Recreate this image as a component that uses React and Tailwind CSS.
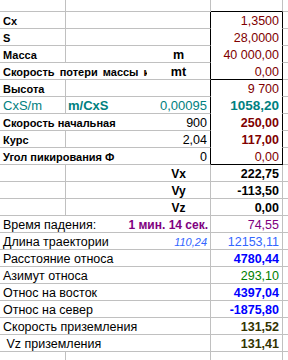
const R = {
  g: 'border-r border-r-[#c0c0c0]',
  k: 'border-r border-r-black',
  n: '',
}
const B = {
  g: 'border-b border-b-[#c0c0c0]',
  k: 'border-b border-b-black',
  w: 'border-b border-b-white',
}
const SPAN = { 1: '', 2: 'col-span-2', 3: 'col-span-3' }

function Cell({ span = 1, r = 'n', b = 'g', className = '', children }) {
  return (
    <div className={`${SPAN[span]} ${R[r]} ${B[b]} flex items-end overflow-hidden whitespace-nowrap leading-none pb-[1px] ${className}`}>
      {children}
    </div>
  )
}

function Row({ h = 'h-[17px]', children }) {
  return <div className={`grid grid-cols-[66px_81px_64px_72px_1fr] ${h}`}>{children}</div>
}

const label = 'pl-[3px] text-[11px] font-bold text-black'
const low = 'pl-[3px] text-[12.5px] text-black'
const val = 'justify-end pr-[3px] text-[12.5px]'

// Верхний блок: исходные данные (в рамке)
const INPUTS = [
  { a: 'Cx', d: '1,3500' },
  { a: 'S', d: '28,0000' },
  { a: 'Масса', c: 'm', d: '40 000,00' },
]

const VELOCITY = [
  { c: 'Vx', d: '222,75' },
  { c: 'Vy', d: '-113,50' },
  { c: 'Vz', d: '0,00' },
]

const RESULTS = [
  { a: 'Длина траектории', c: '110,24', cCls: 'text-[11px] italic text-[#3366ff]', d: '12153,11', dCls: 'text-[#3366ff]' },
  { a: 'Расстояние относа', d: '4780,44', dCls: 'font-bold text-[#0000ff]' },
  { a: 'Азимут относа', d: '293,10', dCls: 'text-[#008000]' },
  { a: 'Относ на восток', d: '4397,04', dCls: 'text-[11px] font-bold text-[#0000ff]' },
  { a: 'Относ на север', d: '-1875,80', dCls: 'text-[11px] font-bold text-[#0000ff]' },
  { a: 'Скорость приземления', d: '131,52', dCls: 'font-bold text-[#333300]' },
  { a: '\u00a0Vz приземления', d: '131,41', dCls: 'font-bold text-[#333300]' },
]

export default function App() {
  return (
    <div className="w-[288px] h-[360px] overflow-hidden bg-white font-['Liberation_Sans',Arial,sans-serif]">
      <Row h="h-[12px]">
        <Cell r="g" />
        <Cell span={2} r="g" />
        <Cell r="g" b="k" />
        <Cell />
      </Row>

      {INPUTS.map((row) => (
        <Row key={row.a}>
          <Cell r="g" className={label}>{row.a}</Cell>
          <Cell />
          <Cell r="k" className="justify-center text-[12.5px] font-bold text-black">{row.c}</Cell>
          <Cell r="k" b="w" className={`${val} text-[#800000]`}>{row.d}</Cell>
          <Cell />
        </Row>
      ))}

      <Row>
        <Cell span={2} className={`${label} [word-spacing:2px]`}>Скорость потери массы к</Cell>
        <Cell r="k" className="justify-center text-[12.5px] font-bold text-black">mt</Cell>
        <Cell r="k" b="k" className={`${val} text-[#800000]`}>0,00</Cell>
        <Cell />
      </Row>

      <Row>
        <Cell r="g" className={label}>Высота</Cell>
        <Cell span={2} r="k" />
        <Cell r="k" b="w" className={`${val} text-[#800000]`}>9 700</Cell>
        <Cell />
      </Row>

      <Row>
        <Cell r="g" className="pl-[3px] text-[13px] text-[#008080]">CxS/m</Cell>
        <Cell className="pl-[2px] text-[13px] font-bold text-[#008080]">m/CxS</Cell>
        <Cell r="k" className={`${val} text-[#008080] text-[13px]`}>0,00095</Cell>
        <Cell r="k" b="w" className={`${val} font-bold text-[#008080] text-[13.5px]`}>1058,20</Cell>
        <Cell />
      </Row>

      <Row>
        <Cell span={2} className={label}>Скорость начальная</Cell>
        <Cell r="k" className={`${val} text-black`}>900</Cell>
        <Cell r="k" b="w" className={`${val} font-bold text-[#800000]`}>250,00</Cell>
        <Cell />
      </Row>

      <Row>
        <Cell r="g" className={label}>Курс</Cell>
        <Cell />
        <Cell r="k" className={`${val} text-black`}>2,04</Cell>
        <Cell r="k" b="w" className={`${val} font-bold text-[#800000]`}>117,00</Cell>
        <Cell />
      </Row>

      <Row>
        <Cell span={2} className={label}>Угол пикирования Ф</Cell>
        <Cell r="k" className={`${val} text-black`}>0</Cell>
        <Cell r="k" b="k" className={`${val} text-[#800000]`}>0,00</Cell>
        <Cell />
      </Row>

      {VELOCITY.map((row) => (
        <Row key={row.c}>
          <Cell r="g" />
          <Cell />
          <Cell r="g" className="justify-center text-[12px] font-bold text-black">{row.c}</Cell>
          <Cell r="g" className={`${val} font-bold text-black`}>{row.d}</Cell>
          <Cell />
        </Row>
      ))}

      <Row>
        <Cell span={3} r="g" className={`${low} justify-between pr-[2px]`}>
          <span>Время падения:</span>
          <span className="text-[12px] font-bold text-[#800080]">1 мин. 14 сек.</span>
        </Cell>
        <Cell r="g" className={`${val} text-[#800080]`}>74,55</Cell>
        <Cell />
      </Row>

      {RESULTS.map((row) => (
        <Row key={row.a}>
          <Cell span={3} r="g" className={`${low} justify-between pr-[3px]`}>
            <span>{row.a}</span>
            {row.c && <span className={row.cCls}>{row.c}</span>}
          </Cell>
          <Cell r="g" className={`${val} ${row.dCls}`}>{row.d}</Cell>
          <Cell />
        </Row>
      ))}

      <Row>
        <Cell r="g" />
        <Cell span={2} r="g" />
        <Cell r="g" />
        <Cell />
      </Row>
    </div>
  )
}
